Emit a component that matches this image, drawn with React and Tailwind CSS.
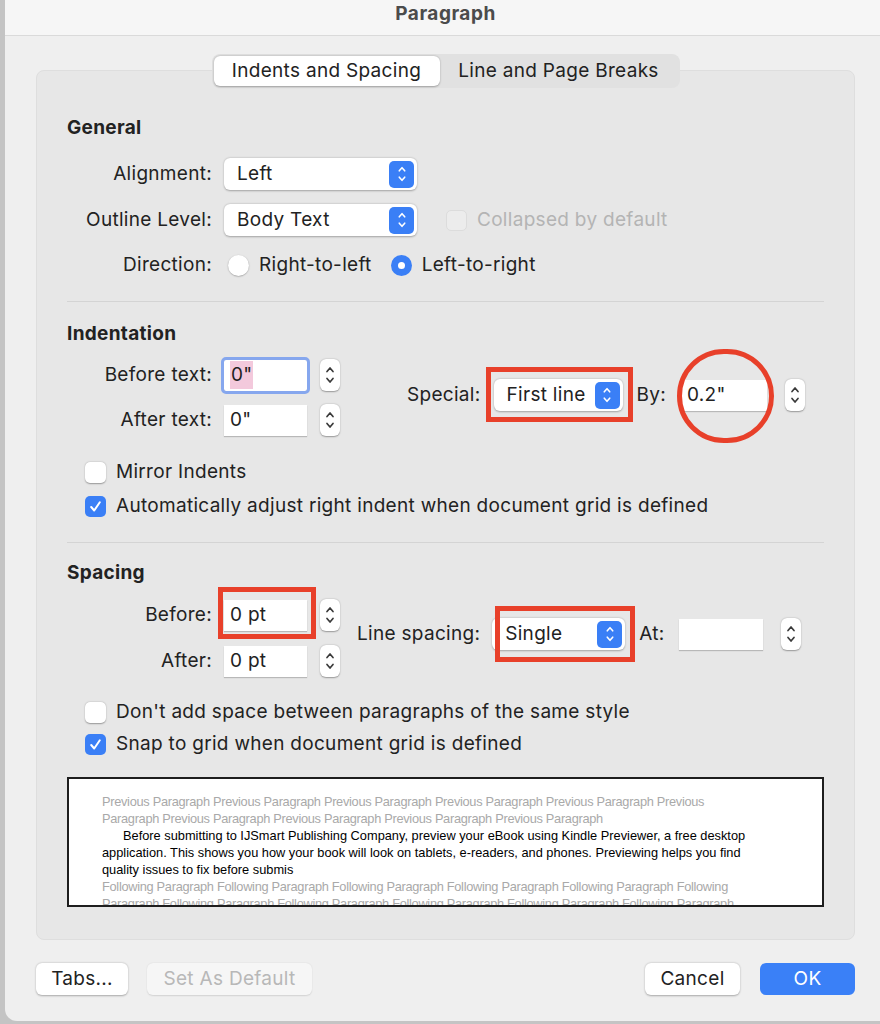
import React from "react";

const red = "border-[#e8402a]";

const Chevrons = ({ className = "stroke-[#3a3a3a]", w = 10, h = 22 }) => (
  <svg width={w} height={h} viewBox="0 0 10 22" fill="none" className={className}>
    <path d="M2 7.5 L5 4 L8 7.5" strokeWidth="1.7" strokeLinecap="round" strokeLinejoin="round" />
    <path d="M2 14.5 L5 18 L8 14.5" strokeWidth="1.7" strokeLinecap="round" strokeLinejoin="round" />
  </svg>
);

const Stepper = () => (
  <div className="w-[20px] h-[32px] rounded-[6px] bg-white shadow-[0_0.5px_1.5px_rgba(0,0,0,0.35)] flex items-center justify-center">
    <Chevrons />
  </div>
);

const Select = ({ value, width = "w-[193px]" }) => (
  <div className={`${width} h-[32px] rounded-[6px] bg-white shadow-[0_0.5px_2px_rgba(0,0,0,0.3)] flex items-center justify-between pl-[13px] pr-[3px]`}>
    <span>{value}</span>
    <div className="w-[25px] h-[27px] rounded-[5px] bg-[#3a7ff6] flex items-center justify-center">
      <Chevrons className="stroke-white" w={10} h={20} />
    </div>
  </div>
);

const TextInput = ({ value, width = "w-[83px]", focused, highlight }) => (
  <div
    className={`${width} h-[31px] bg-white flex items-center pl-[6px] shadow-[0_1px_1px_rgba(0,0,0,0.2)] ${
      focused ? "outline-[3px] outline-solid outline-[#86a7ee] rounded-[2px]" : ""
    }`}
  >
    <span className={highlight ? "bg-[#f3c9dc] px-[1px]" : ""}>{value}</span>
  </div>
);

const Checkbox = ({ checked, disabled }) =>
  checked ? (
    <div className="w-[21px] h-[21px] rounded-[5px] bg-[#3a7ff6] flex items-center justify-center">
      <svg width="13" height="13" viewBox="0 0 13 13" fill="none">
        <path d="M2.2 7 L5.2 10.5 L10.8 2.3" stroke="white" strokeWidth="2" strokeLinecap="round" strokeLinejoin="round" />
      </svg>
    </div>
  ) : (
    <div
      className={`w-[21px] h-[21px] rounded-[5px] ${
        disabled ? "bg-[#ececec] border border-[#dcdcdc]" : "bg-white shadow-[0_0.5px_1.5px_rgba(0,0,0,0.35)]"
      }`}
    />
  );

const Radio = ({ checked }) =>
  checked ? (
    <div className="w-[21px] h-[21px] rounded-full bg-[#3a7ff6] flex items-center justify-center">
      <div className="w-[7px] h-[7px] rounded-full bg-white" />
    </div>
  ) : (
    <div className="w-[21px] h-[21px] rounded-full bg-white shadow-[0_0.5px_1.5px_rgba(0,0,0,0.35)]" />
  );

const Label = ({ children }) => (
  <div className="w-[157px] text-right pr-[12px] shrink-0">{children}</div>
);

const Button = ({ children, className = "" }) => (
  <button className={`h-[32px] rounded-[6px] flex items-center justify-center ${className}`}>
    {children}
  </button>
);

const previewPrev = [
  "Previous Paragraph Previous Paragraph Previous Paragraph Previous Paragraph Previous Paragraph Previous",
  "Paragraph Previous Paragraph Previous Paragraph Previous Paragraph Previous Paragraph",
];
const previewMain = [
  "Before submitting to IJSmart Publishing Company, preview your eBook using Kindle Previewer, a free desktop",
  "application. This shows you how your book will look on tablets, e-readers, and phones. Previewing helps you find",
  "quality issues to fix before submis",
];
const previewNext = [
  "Following Paragraph Following Paragraph Following Paragraph Following Paragraph Following Paragraph Following",
  "Paragraph Following Paragraph Following Paragraph Following Paragraph Following Paragraph Following Paragraph",
];

export default function App() {
  return (
    <div className="w-[880px] h-[1024px] bg-[#c4c4c4] overflow-hidden font-['Inter',sans-serif] text-[19px] tracking-[0.3px] text-[#222222]">
      <div className="ml-[5px] h-[1021px] bg-[#efefef] rounded-bl-[12px] flex flex-col">
        {/* title bar */}
        <div className="h-[36px] shrink-0 bg-[#f6f6f6] border-b border-[#dadada] flex items-center justify-center">
          <span className="text-[19px] font-bold text-[#4b4b4b] tracking-[0.5px] -mt-[6px] ml-[6px]">Paragraph</span>
        </div>

        <div className="pl-[31px] pr-[25px] pt-[18px] flex flex-col">
          {/* tabs */}
          <div className="flex justify-center relative z-10 -mb-[18px]">
            <div className="h-[34px] rounded-[8px] bg-[#e1e1e1] p-[2px] flex">
              <div className="w-[226px] rounded-[6px] bg-white shadow-[0_0.5px_2px_rgba(0,0,0,0.3)] flex items-center justify-center">
                Indents and Spacing
              </div>
              <div className="w-[238px] flex items-center justify-center">Line and Page Breaks</div>
            </div>
          </div>

          {/* panel */}
          <div className="h-[870px] rounded-[8px] bg-[#e7e7e7] border border-[#dedede] pl-[30px] pr-[30px] pt-[45px] flex flex-col">
            <div className="font-bold h-[24px] leading-[24px]">General</div>

            <div className="flex items-center mt-[18px] h-[32px]">
              <Label>Alignment:</Label>
              <Select value="Left" />
            </div>
            <div className="flex items-center mt-[14px] h-[32px]">
              <Label>Outline Level:</Label>
              <Select value="Body Text" />
              <div className="ml-[29px] flex items-center gap-[10px] text-[#b4b4b4]">
                <Checkbox disabled />
                <span>Collapsed by default</span>
              </div>
            </div>
            <div className="flex items-center mt-[13px] h-[32px]">
              <Label>Direction:</Label>
              <div className="flex items-center gap-[10px] ml-[4px]">
                <Radio />
                <span>Right-to-left</span>
              </div>
              <div className="flex items-center gap-[10px] ml-[19px]">
                <Radio checked />
                <span>Left-to-right</span>
              </div>
            </div>

            <div className="mt-[20px] border-t border-[#d4d4d4]" />

            <div className="font-bold h-[24px] leading-[24px] mt-[20px]">Indentation</div>

            <div className="flex mt-[13px]">
              <div className="flex flex-col gap-[13px]">
                <div className="flex items-center h-[32px]">
                  <Label>Before text:</Label>
                  <TextInput value={'0"'} focused highlight />
                  <div className="ml-[13px]"><Stepper /></div>
                </div>
                <div className="flex items-center h-[32px]">
                  <Label>After text:</Label>
                  <TextInput value={'0"'} />
                  <div className="ml-[13px]"><Stepper /></div>
                </div>
              </div>
              <div className="flex items-center h-[32px] mt-[20px] ml-[67px]">
                <span>Special:</span>
                <div className="relative ml-[13px]">
                  <Select value="First line" width="w-[129px]" />
                  <div className={`absolute -left-[8px] -right-[10px] -top-[12px] -bottom-[11px] border-[5px] ${red}`} />
                </div>
                <span className="ml-[14px]">By:</span>
                <div className="relative ml-[15px]">
                  <TextInput value={'0.2"'} width="w-[86px]" />
                  <div className={`absolute -left-[4px] -right-[7px] -top-[31px] -bottom-[32px] rounded-full border-[5px] ${red}`} />
                </div>
                <div className="ml-[18px]"><Stepper /></div>
              </div>
            </div>

            <div className="flex items-center gap-[10px] mt-[25px] ml-[18px] h-[22px]">
              <Checkbox />
              <span>Mirror Indents</span>
            </div>
            <div className="flex items-center gap-[10px] mt-[12px] ml-[18px] h-[22px]">
              <Checkbox checked />
              <span>Automatically adjust right indent when document grid is defined</span>
            </div>

            <div className="mt-[25px] border-t border-[#d4d4d4]" />

            <div className="font-bold h-[24px] leading-[24px] mt-[18px]">Spacing</div>

            <div className="flex mt-[14px]">
              <div className="flex flex-col gap-[14px]">
                <div className="flex items-center h-[32px]">
                  <Label>Before:</Label>
                  <div className="relative">
                    <TextInput value="0 pt" />
                    <div className={`absolute -left-[6px] -right-[9px] -top-[13px] -bottom-[8px] border-[5px] ${red}`} />
                  </div>
                  <div className="ml-[13px]"><Stepper /></div>
                </div>
                <div className="flex items-center h-[32px]">
                  <Label>After:</Label>
                  <TextInput value="0 pt" />
                  <div className="ml-[13px]"><Stepper /></div>
                </div>
              </div>
              <div className="flex items-center h-[32px] mt-[19px] ml-[17px]">
                <span>Line spacing:</span>
                <div className="relative ml-[12px]">
                  <Select value="Single" width="w-[133px]" />
                  <div className={`absolute left-[3px] -right-[10px] -top-[12px] -bottom-[12px] border-[5px] ${red}`} />
                </div>
                <span className="ml-[14px]">At:</span>
                <div className="ml-[14px]">
                  <TextInput value="" width="w-[84px]" />
                </div>
                <div className="ml-[18px]"><Stepper /></div>
              </div>
            </div>

            <div className="flex items-center gap-[10px] mt-[24px] ml-[18px] h-[22px]">
              <Checkbox />
              <span>Don't add space between paragraphs of the same style</span>
            </div>
            <div className="flex items-center gap-[10px] mt-[10px] ml-[18px] h-[22px]">
              <Checkbox checked />
              <span>Snap to grid when document grid is defined</span>
            </div>

            {/* preview */}
            <div className="mt-[22px] h-[130px] bg-white border-2 border-[#1e1e1e] overflow-hidden pt-[14px] pl-[33px] font-['Liberation_Sans',sans-serif] text-[12.8px] leading-[17px] tracking-normal">
              {previewPrev.map((l) => (
                <div key={l} className="whitespace-nowrap text-[#a9a9a9] tracking-[-0.3px]">{l}</div>
              ))}
              {previewMain.map((l, i) => (
                <div key={l} className={`whitespace-nowrap text-black ${i === 0 ? "pl-[21px]" : ""}`}>{l}</div>
              ))}
              {previewNext.map((l) => (
                <div key={l} className="whitespace-nowrap text-[#a9a9a9] tracking-[-0.3px]">{l}</div>
              ))}
            </div>
          </div>

          {/* footer buttons */}
          <div className="flex items-center mt-[23px]">
            <Button className="w-[92px] bg-white shadow-[0_0.5px_2px_rgba(0,0,0,0.3)]">Tabs...</Button>
            <Button className="w-[165px] ml-[19px] bg-[#f6f6f6] text-[#b8b8b8] shadow-[0_0.5px_1.5px_rgba(0,0,0,0.12)]">
              Set As Default
            </Button>
            <div className="flex-1" />
            <Button className="w-[95px] bg-white shadow-[0_0.5px_2px_rgba(0,0,0,0.3)]">Cancel</Button>
            <Button className="w-[95px] ml-[20px] bg-[#3a80f7] text-white">OK</Button>
          </div>
        </div>
      </div>
    </div>
  );
}
